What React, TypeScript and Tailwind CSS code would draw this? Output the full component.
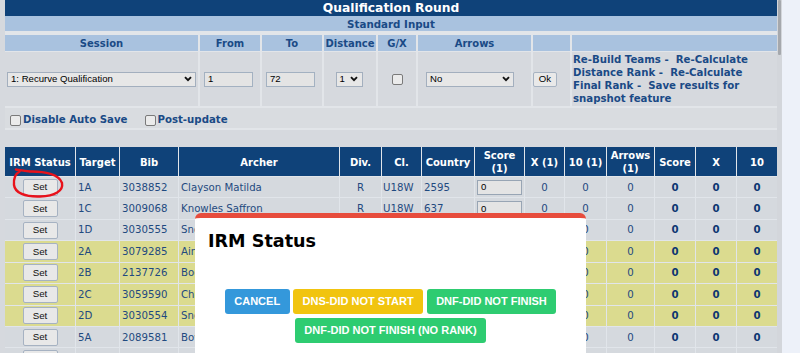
import React from "react";

const rows = [
  { t: "1A", bib: "3038852", name: "Clayson Matilda", y: false },
  { t: "1C", bib: "3009068", name: "Knowles Saffron", y: false },
  { t: "1D", bib: "3030555", name: "Snowden Ella", y: false },
  { t: "2A", bib: "3079285", name: "Ainsley Grace", y: true },
  { t: "2B", bib: "2137726", name: "Booth Emily", y: true },
  { t: "2C", bib: "3059590", name: "Christie Amber", y: true },
  { t: "2D", bib: "3030554", name: "Snowden Lucy", y: true },
  { t: "5A", bib: "2089581", name: "Bowen Harriet", y: false },
  { t: "5B", bib: "2090112", name: "Bradley Sophie", y: false },
];
const countries = ["2595", "637", "2595", "1021", "2595", "637", "2595", "1180", "2595"];

function Chevron() {
  return (
    <svg width="8" height="6" viewBox="0 0 8 6" className="shrink-0">
      <path d="M1 1.2L4 4.2L7 1.2" fill="none" stroke="#111" strokeWidth="1.9" />
    </svg>
  );
}

function FakeSelect({ text, w, ml = 0 }: { text: string; w: number; ml?: number }) {
  return (
    <div
      className="h-[15px] flex items-center justify-between pl-[3px] pr-[3px] border border-[#a3afbe] bg-[#e7e7e7] font-['Liberation_Sans',Arial,sans-serif] text-[9.6px] text-black"
      style={{ width: w, marginLeft: ml }}
    >
      <span className="leading-none">{text}</span>
      <Chevron />
    </div>
  );
}

function FakeInput({ text, w, ml = 0 }: { text: string; w: number; ml?: number }) {
  return (
    <div
      className="h-[15px] flex items-center pl-[3px] border border-[#a3b1c1] bg-[#e4e4e4] font-['Liberation_Sans',Arial,sans-serif] text-[9.6px] text-black leading-none"
      style={{ width: w, marginLeft: ml }}
    >
      {text}
    </div>
  );
}

function Check() {
  return <div className="w-[11px] h-[11px] rounded-[2px] border border-[#7a7a7a] bg-[#ebebeb] shrink-0" />;
}

export default function App() {
  const hdr = "bg-[#a9c2df] flex items-center justify-center pt-[1px] font-bold text-[10px] text-[#1a4a86] leading-none";
  const dh = "bg-[#0f4279] flex items-center justify-center text-center pt-[1px] font-bold text-[10px] leading-[13px] text-white";
  return (
    <div className="relative w-[800px] h-[353px] overflow-hidden flex bg-[#edf1f9] font-['DejaVu_Sans',Verdana,sans-serif]">
      <div className="w-[782px] h-full flex shrink-0 bg-[#d6d9de]">
        <div className="w-[5px] shrink-0" />
        <div className="w-[772px] shrink-0">
          {/* Title */}
          <div className="h-[16px] bg-[#0f4279] flex items-center justify-center pt-[1px] text-white font-bold text-[12.3px] leading-none">
            Qualification Round
          </div>
          <div className="h-[15px] bg-[#a9c2df] flex items-center justify-center pt-[1px] font-bold text-[10.3px] text-[#1a4a86] leading-none">
            Standard Input
          </div>
          <div className="h-[4px] bg-[#e2e5e9]" />
          {/* top form table */}
          <div className="grid grid-cols-[193px_60px_60px_52px_38px_113px_37px_205px] grid-rows-[16px_54px] gap-x-[2px] gap-y-[1px] bg-[#e2e5e9]">
            <div className={hdr}>Session</div>
            <div className={hdr}>From</div>
            <div className={hdr}>To</div>
            <div className={hdr}>Distance</div>
            <div className={hdr}>G/X</div>
            <div className={hdr}>Arrows</div>
            <div className={hdr}></div>
            <div className={hdr}></div>

            <div className="bg-[#d6d9de] flex items-center justify-center">
              <FakeSelect text="1: Recurve Qualification" w={189} />
            </div>
            <div className="bg-[#d6d9de] flex items-center">
              <FakeInput text="1" w={49} ml={4} />
            </div>
            <div className="bg-[#d6d9de] flex items-center">
              <FakeInput text="72" w={49} ml={4} />
            </div>
            <div className="bg-[#d6d9de] flex items-center justify-center">
              <div className="h-[15px] w-[27px] flex items-center gap-[5px] pl-[3px] border border-[#a3afbe] bg-[#e7e7e7] font-['Liberation_Sans',Arial,sans-serif] text-[9.6px] text-black leading-none mr-[2px]">
                <span>1</span>
                <Chevron />
              </div>
            </div>
            <div className="bg-[#d6d9de] flex items-center justify-center">
              <Check />
            </div>
            <div className="bg-[#d6d9de] flex items-center">
              <FakeSelect text="No" w={88} ml={8} />
            </div>
            <div className="bg-[#d6d9de] flex items-center">
              <div className="h-[15px] w-[24px] flex items-center justify-center border border-[#a7b3c2] bg-[#e9e9e9] rounded-[2px] font-['Liberation_Sans',Arial,sans-serif] text-[9.6px] text-black leading-none">
                Ok
              </div>
            </div>
            <div className="bg-[#d6d9de] flex items-center pl-[1px] font-bold text-[10.2px] leading-[13px] text-[#1a4a86] whitespace-nowrap">
              <div>
                Re-Build Teams -{"\u00a0 "}Re-Calculate
                <br />
                Distance Rank -{"\u00a0 "}Re-Calculate
                <br />
                Final Rank -{"\u00a0 "}Save results for
                <br />
                snapshot feature
              </div>
            </div>
          </div>
          <div className="h-[2px] bg-[#e2e5e9]" />
          <div className="h-[20px] bg-[#d9dce0] flex items-center pt-[4px] font-bold text-[10.2px] text-[#1a4a86] leading-none">
            <div className="flex items-center ml-[5px] gap-[2px]">
              <Check />
              <span>Disable Auto Save</span>
            </div>
            <div className="flex items-center ml-[18px] gap-[1px]">
              <Check />
              <span>Post-update</span>
            </div>
          </div>
          <div className="h-[2px] bg-[#e2e5e9]" />
          <div className="h-[17px]" />
          {/* data table */}
          <div className="grid grid-cols-[70px_43px_58px_160px_41px_39px_52px_49px_39px_41px_47px_40px_40px_40px] grid-rows-[29px] auto-rows-[20.43px] gap-px bg-[#e1e5ea] text-[10.2px] leading-none">
            <div className={dh}>IRM Status</div>
            <div className={dh}>Target</div>
            <div className={dh}>Bib</div>
            <div className={dh}>Archer</div>
            <div className={dh}>Div.</div>
            <div className={dh}>Cl.</div>
            <div className={dh}>Country</div>
            <div className={dh}>
              Score
              <br />
              (1)
            </div>
            <div className={dh}>X (1)</div>
            <div className={dh}>10 (1)</div>
            <div className={dh}>
              Arrows
              <br />
              (1)
            </div>
            <div className={dh}>Score</div>
            <div className={dh}>X</div>
            <div className={dh}>10</div>

            {rows.map((r, i) => {
              const bg = r.y ? "bg-[#dbdb8f]" : "bg-[#d5d9de]";
              const c = `${bg} flex items-center pt-[1px] text-[#1f4a80]`;
              const b = `${bg} flex items-center justify-center pt-[1px] font-bold text-[#0c3671]`;
              return (
                <React.Fragment key={r.t}>
                  <div className={`${bg} flex items-center justify-center`}>
                    <div className="w-[35px] h-[17px] flex items-center justify-center border border-[#a6b2c2] bg-[#e8e8e8] rounded-[2px] font-['Liberation_Sans',Arial,sans-serif] text-[9.8px] text-[#111]">
                      Set
                    </div>
                  </div>
                  <div className={`${c} pl-[2px]`}>{r.t}</div>
                  <div className={`${c} pl-[2px]`}>{r.bib}</div>
                  <div className={`${c} pl-[2px] whitespace-nowrap overflow-hidden`}>{r.name}</div>
                  <div className={`${c} justify-center`}>R</div>
                  <div className={`${c} pl-[1px]`}>U18W</div>
                  <div className={`${c} pl-[2px]`}>{countries[i]}</div>
                  <div className={`${bg} flex items-center`}>
                    <div className="ml-[2px] w-[45px] h-[15px] flex items-center pl-[3px] border border-[#98a5b4] bg-[#e4e4e4] font-['Liberation_Sans',Arial,sans-serif] text-[9.6px] text-black leading-none">
                      0
                    </div>
                  </div>
                  <div className={`${c} justify-center`}>0</div>
                  <div className={`${c} justify-center`}>0</div>
                  <div className={`${c} justify-center`}>0</div>
                  <div className={b}>0</div>
                  <div className={b}>0</div>
                  <div className={b}>0</div>
                </React.Fragment>
              );
            })}
          </div>
        </div>
        {/* scrollbar */}
        <div className="w-[5px] shrink-0 h-full bg-[#d3d6db] flex justify-center">
          <div className="w-[3px] h-[55px] bg-[#a5a8ad] rounded-[1px]" />
        </div>
      </div>
      <div className="flex-1" />

      {/* red annotation */}
      <svg className="absolute left-0 top-0 pointer-events-none" width="80" height="200" viewBox="0 0 80 200">
        <path
          d="M16 169.5 C 21 170.3, 25 171, 30 171.5 C 45 171.2, 59 174.5, 62 183 C 63.5 191, 55 196, 40 196.5 C 25 197, 15 193, 14 185 C 13.5 179, 15 174, 19.5 171.5"
          fill="none"
          stroke="#e8121b"
          strokeWidth="2.4"
          strokeLinecap="round"
        />
      </svg>

      {/* modal */}
      <div className="absolute left-[195px] top-[213px] w-[391px] h-[180px] bg-white border-t-[5px] border-[#e74c3c] rounded-t-[6px]">
        <div className="pt-[13px] pl-[13px] font-bold text-[17.6px] leading-[20px] text-black">IRM Status</div>
        <div className="mt-[38px] flex flex-wrap justify-center gap-x-[3.5px] gap-y-[4px] font-['Liberation_Sans',Arial,sans-serif] font-bold text-[11px] text-white">
          <div className="h-[25px] px-[9.5px] flex items-center rounded-[3px] bg-[#3498db]">CANCEL</div>
          <div className="h-[25px] px-[9.5px] flex items-center rounded-[3px] bg-[#f1c40f]">DNS-DID NOT START</div>
          <div className="h-[25px] px-[9.5px] flex items-center rounded-[3px] bg-[#2ecc71]">DNF-DID NOT FINISH</div>
          <div className="h-[25px] px-[9.5px] flex items-center rounded-[3px] bg-[#2ecc71]">DNF-DID NOT FINISH (NO RANK)</div>
        </div>
      </div>
    </div>
  );
}
